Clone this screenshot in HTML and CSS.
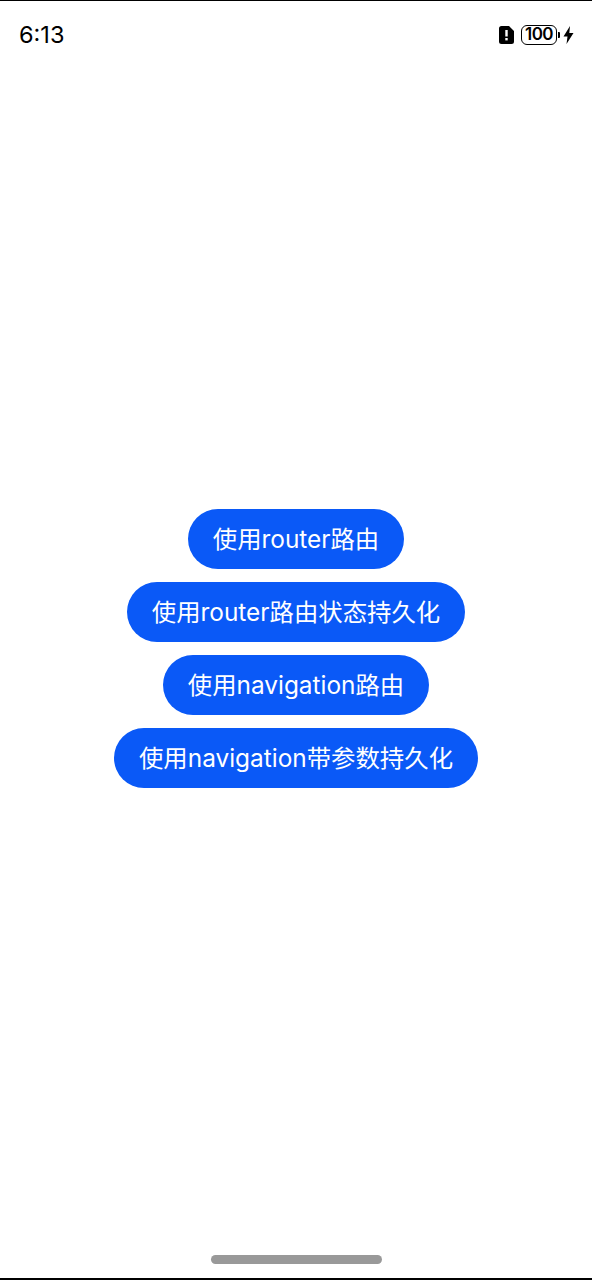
FILE: index.html
```html
<!DOCTYPE html>
<html lang="zh">
<head>
  <meta charset="UTF-8"/>
  <meta name="viewport" content="width=device-width, initial-scale=1.0"/>
  <title>路由</title>
  <link rel="stylesheet" href="styles.css">
</head>
<body>
<div class="page">
  <div class="status_bar">
    <span class="time">6:13</span>
    <div class="status_icons">
      <svg class="sim_icon" width="15" height="18" viewBox="0 0 15 18">
        <path d="M2.5 0H10L15 5V15.5A2.5 2.5 0 0 1 12.500 18H2.500A2.500 2.500 0 0 1 0 15.500V2.500A2.500 2.500 0 0 1 2.500 0Z" fill="#000"/>
        <rect x="6.300" y="4" width="2.400" height="6.500" fill="#fff"/>
        <rect x="6.300" y="12" width="2.400" height="2.400" fill="#fff"/>
      </svg>
      <div class="battery"><span class="battery_level">100</span></div>
      <div class="battery_nib"></div>
      <svg class="bolt_icon" width="11" height="18" viewBox="0 0 11 18">
        <path d="M7 0L0.500 10.500H4.500L3.500 18L10.500 7H6.300Z" fill="#000"/>
      </svg>
    </div>
  </div>

  <div class="btn_wrap">
    <button class="route_btn">使用router路由</button>
    <button class="route_btn">使用router路由状态持久化</button>
    <button class="route_btn">使用navigation路由</button>
    <button class="route_btn">使用navigation带参数持久化</button>
  </div>

  <div class="home_area">
    <div class="home_bar"></div>
  </div>
</div>
</body>
</html>
```

FILE: styles.css
```css
* {
    box-sizing: border-box;
}

body {
    margin: 0;
    background-color: #fff;
    font-family: "Inter", "Noto Sans CJK SC", sans-serif;
}

.page {
    display: flex;
    flex-direction: column;
    height: 1280px;
    border-top: 1px solid #000;
    border-bottom: 2px solid #000;
}

.status_bar {
    display: flex;
    justify-content: space-between;
    align-items: center;
    height: 67px;
    padding: 0 18px 0 19px;
}

.time {
    font-size: 23.500px;
    color: #000;
}

.status_icons {
    display: flex;
    align-items: center;
}

.battery {
    display: flex;
    align-items: center;
    justify-content: center;
    width: 36px;
    height: 20px;
    margin-left: 7px;
    border: 1.500px solid #000;
    border-radius: 6px;
}

.battery_level {
    font-size: 17px;
    font-weight: 600;
    line-height: 1;
    letter-spacing: -0.500px;
}

.battery_nib {
    width: 2px;
    height: 6px;
    margin-left: 1px;
    background-color: #000;
    border-radius: 0 1px 1px 0;
}

.bolt_icon {
    margin-left: 3px;
}

.btn_wrap {
    flex: 1;
    display: flex;
    flex-direction: column;
    align-items: center;
    justify-content: center;
    gap: 13px;
}

.route_btn {
    height: 60px;
    padding: 0 24.500px 3px;
    font-family: inherit;
    font-size: 24.400px;
    color: #fff;
    background-color: #0a59f7;
    border: none;
    border-radius: 30px;
}

.home_area {
    display: flex;
    justify-content: center;
    height: 50px;
    padding-top: 27px;
}

.home_bar {
    width: 171px;
    height: 9px;
    background-color: #999;
    border-radius: 5px;
}
```
